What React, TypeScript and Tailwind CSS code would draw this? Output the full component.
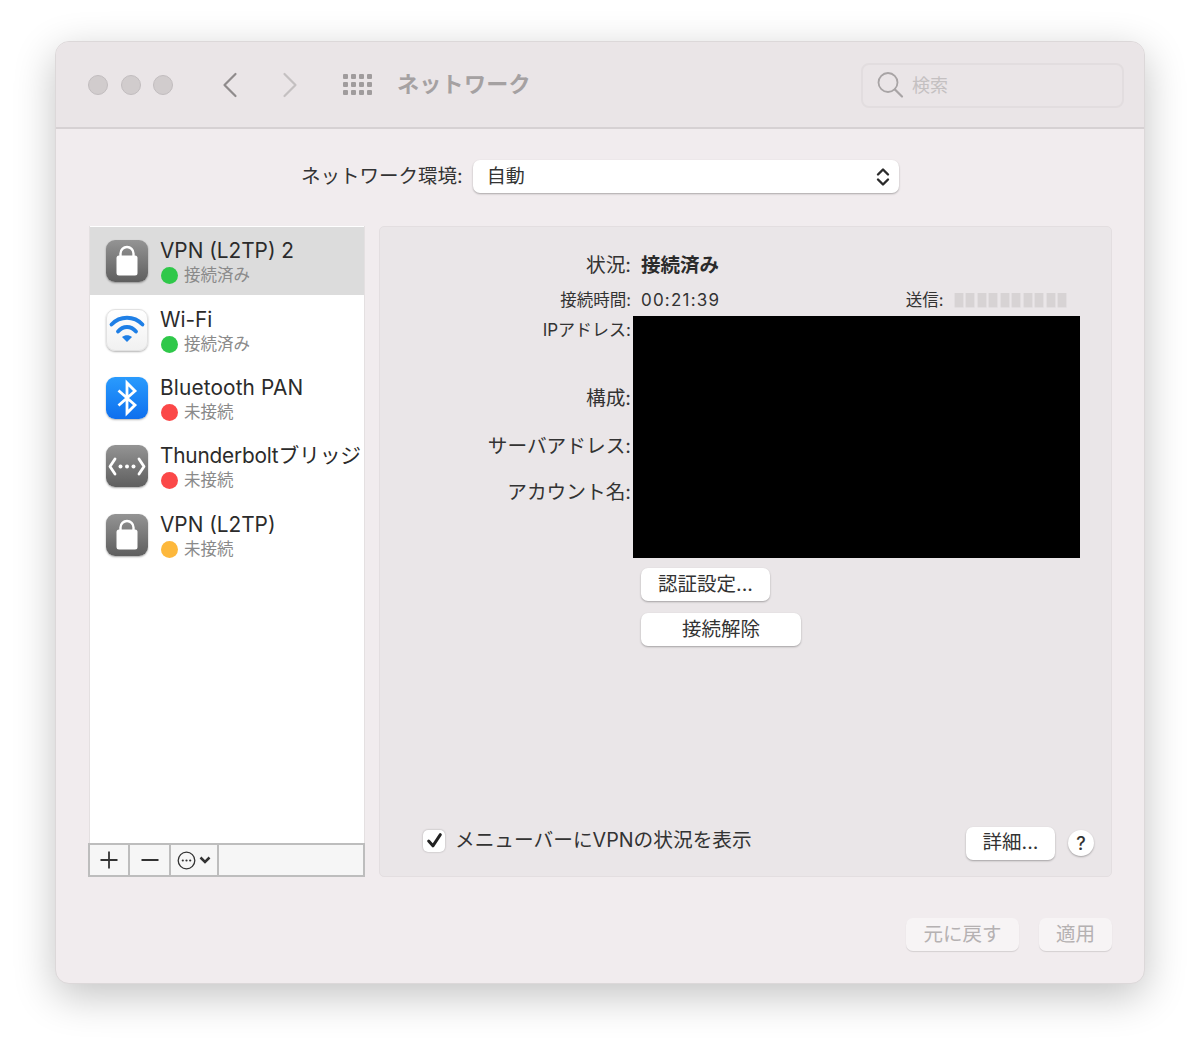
import { ChevronLeft, ChevronRight } from 'lucide-react'
import type { ReactNode } from 'react'

function LockIcon() {
  return (
    <div className="w-[42px] h-[42px] rounded-[9px] bg-gradient-to-b from-[#949494] to-[#5f5f5f] shadow-[0_1px_2px_rgba(0,0,0,0.35)] flex items-center justify-center">
      <svg width="42" height="42" viewBox="0 0 42 42">
        <path d="M14.5 17v-3.5a6.5 6.5 0 0 1 13 0V17" fill="none" stroke="#fff" strokeWidth="2.4" />
        <rect x="10.5" y="15.5" width="21" height="20" rx="2.5" fill="#fff" />
      </svg>
    </div>
  )
}

function WifiIcon() {
  return (
    <div className="w-[42px] h-[42px] rounded-[9px] bg-gradient-to-b from-white to-[#f1f1f1] border border-[#e2e2e2] shadow-[0_1px_2px_rgba(0,0,0,0.3)] flex items-center justify-center">
      <svg width="40" height="40" viewBox="0 0 40 40">
        <path d="M4.5 14.5C13 5.5 27 5.5 35.5 14.5" fill="none" stroke="#1e7fe6" strokeWidth="3.8" strokeLinecap="round" />
        <path d="M11 21.5C16 15.5 24 15.5 29 21.5" fill="none" stroke="#1e7fe6" strokeWidth="3.8" strokeLinecap="round" />
        <path d="M15 27 20 32 25 27C22 24.5 18 24.5 15 27Z" fill="#1e7fe6" />
      </svg>
    </div>
  )
}

function BluetoothIcon() {
  return (
    <div className="w-[42px] h-[42px] rounded-[9px] bg-gradient-to-b from-[#2a9bfd] to-[#0f6fee] shadow-[0_1px_2px_rgba(0,0,0,0.3)] flex items-center justify-center">
      <svg width="42" height="42" viewBox="0 0 42 42">
        <path d="M12.5 13.5 29 28 21 36V6l8 8-16.5 14.5" fill="none" stroke="#fff" strokeWidth="2.8" strokeLinejoin="miter" />
      </svg>
    </div>
  )
}

function BridgeIcon() {
  return (
    <div className="w-[42px] h-[42px] rounded-[9px] bg-gradient-to-b from-[#949494] to-[#5f5f5f] shadow-[0_1px_2px_rgba(0,0,0,0.35)] flex items-center justify-center">
      <svg width="42" height="42" viewBox="0 0 42 42">
        <path d="M9 14 4 21.5 9 29M33 14 38 21.5 33 29" fill="none" stroke="#fff" strokeWidth="2.8" strokeLinecap="round" strokeLinejoin="round" />
        <circle cx="14.5" cy="21.5" r="2" fill="#fff" />
        <circle cx="21" cy="21.5" r="2" fill="#fff" />
        <circle cx="27.5" cy="21.5" r="2" fill="#fff" />
      </svg>
    </div>
  )
}

const services = [
  { name: 'VPN (L2TP) 2', status: '接続済み', dot: 'bg-[#2fc84a]', icon: <LockIcon />, active: true, track: '' },
  { name: 'Wi-Fi', status: '接続済み', dot: 'bg-[#2fc84a]', icon: <WifiIcon />, active: false, track: '' },
  { name: 'Bluetooth PAN', status: '未接続', dot: 'bg-[#fb4848]', icon: <BluetoothIcon />, active: false, track: 'tracking-[0.15px]' },
  { name: 'Thunderboltブリッジ', status: '未接続', dot: 'bg-[#fb4848]', icon: <BridgeIcon />, active: false, track: 'tracking-[-0.2px]' },
  { name: 'VPN (L2TP)', status: '未接続', dot: 'bg-[#fdb83c]', icon: <LockIcon />, active: false, track: '' },
]

function ServiceRow({ item }: { item: (typeof services)[number] }) {
  return (
    <div className={'h-[68.4px] pl-[16px] flex items-center gap-[12px] whitespace-nowrap ' + (item.active ? 'bg-[#dcdcdc]' : '')}>
      {item.icon}
      <div className="pt-[1px]">
        <div className={'text-[20.8px] leading-[27px] text-[#2b2b2b] ' + item.track}>{item.name}</div>
        <div className="flex items-center gap-[6px] h-[22px] pl-[1px] pt-[1px]">
          <span className={'w-[17px] h-[17px] rounded-full ' + item.dot} />
          <span className="text-[16.5px] text-[#8a8a8a]">{item.status}</span>
        </div>
      </div>
    </div>
  )
}

function MacButton({ children, className }: { children: ReactNode; className: string }) {
  return (
    <button className={'h-[33px] rounded-[7px] bg-white text-[#333] text-[19.5px] leading-none shadow-[0_1px_2px_rgba(0,0,0,0.3)] flex items-center justify-center ' + className}>
      {children}
    </button>
  )
}

export default function App() {
  return (
    <div className="w-[1200px] h-[1052px] bg-white pt-[41px] pl-[55px] font-['Inter','Noto_Sans_CJK_JP',sans-serif] overflow-hidden">
      <div className="w-[1090px] h-[943px] rounded-[14px] bg-[#f1ecee] border border-[#dcd8d9] shadow-[0_12px_42px_rgba(0,0,0,0.24)] overflow-hidden flex flex-col">
        <div className="h-[87px] shrink-0 bg-[#eae5e7] border-b-2 border-[#d6d1d3] flex items-center pl-[32px] pr-[20px]">
          <div className="flex gap-[12.5px]">
            <span className="w-[20px] h-[20px] rounded-full bg-[#d1cccd] border border-[#c2bdbf]" />
            <span className="w-[20px] h-[20px] rounded-full bg-[#d1cccd] border border-[#c2bdbf]" />
            <span className="w-[20px] h-[20px] rounded-full bg-[#d1cccd] border border-[#c2bdbf]" />
          </div>
          <ChevronLeft className="ml-[35px] w-[44px] h-[44px] text-[#8f8b8c]" strokeWidth={1.2} />
          <ChevronRight className="ml-[16px] w-[44px] h-[44px] text-[#c4c0c1]" strokeWidth={1.2} />
          <div className="ml-[31px] grid grid-cols-4 gap-x-[3px] gap-y-[3px]">
            {Array.from({ length: 12 }).map((_, i) => (
              <span key={i} className="w-[5px] h-[5px] bg-[#a09c9d] rounded-[1px]" />
            ))}
          </div>
          <div className="ml-[25px] text-[22px] font-bold text-[#a5a1a2] tracking-[0.3px] whitespace-nowrap">ネットワーク</div>
          <div className="ml-auto mt-[1px] w-[263px] h-[45px] rounded-[8px] border-2 border-[#e2dddf] flex items-center pl-[13px] gap-[8px]">
            <svg width="28" height="28" viewBox="0 0 28 28">
              <circle cx="12" cy="11.5" r="9.5" fill="none" stroke="#a8a4a5" strokeWidth="1.8" />
              <path d="M19 18.5 26 25.5" stroke="#a8a4a5" strokeWidth="2.2" strokeLinecap="round" />
            </svg>
            <span className="text-[18px] text-[#c4c0c1]">検索</span>
          </div>
        </div>

        <div className="flex-1 flex flex-col pl-[33px] pr-[32px]">
          <div className="h-[97px] shrink-0 flex items-center justify-start pl-[212px] gap-[10px] pb-[2px]">
            <span className="text-[19.5px] text-[#333] whitespace-nowrap">ネットワーク環境:</span>
            <div className="w-[426px] h-[33px] rounded-[7px] bg-white shadow-[0_1px_2px_rgba(0,0,0,0.3)] flex items-center justify-between pl-[14px] pr-[9px]">
              <span className="pt-[1px] text-[19px] text-[#333]">自動</span>
              <svg width="14" height="22" viewBox="0 0 14 22">
                <path d="M2 8.5 7 3.5l5 5M2 13.5 7 18.5l5-5" fill="none" stroke="#2b2b2b" strokeWidth="2.4" strokeLinecap="round" strokeLinejoin="round" />
              </svg>
            </div>
          </div>

          <div className="h-[651px] shrink-0 flex gap-[14px]">
            <div className="w-[276px] flex flex-col bg-white">
              <div className="flex-1 pt-[1px] border-x border-[#e4e0e1]">
                {services.map((s) => (
                  <ServiceRow key={s.name} item={s} />
                ))}
              </div>
              <div className="h-[34px] -ml-[1px] flex bg-[#f6f6f6] border-2 border-[#bdbdbd] text-[#333]">
                <div className="w-[40px] border-r-2 border-[#bdbdbd] flex items-center justify-center">
                  <svg width="18" height="18" viewBox="0 0 18 18"><path d="M9 0.5V17.5M0.5 9H17.5" stroke="#333" strokeWidth="1.8" /></svg>
                </div>
                <div className="w-[41px] border-r-2 border-[#bdbdbd] flex items-center justify-center">
                  <svg width="18" height="18" viewBox="0 0 18 18"><path d="M0.5 9H17.5" stroke="#333" strokeWidth="1.8" /></svg>
                </div>
                <div className="w-[48px] border-r-2 border-[#bdbdbd] flex items-center justify-center gap-[3px]">
                  <svg width="19" height="19" viewBox="0 0 19 19">
                    <circle cx="9.5" cy="9.5" r="8.3" fill="none" stroke="#333" strokeWidth="1.3" />
                    <circle cx="5.8" cy="9.5" r="1.1" fill="#333" />
                    <circle cx="9.5" cy="9.5" r="1.1" fill="#333" />
                    <circle cx="13.2" cy="9.5" r="1.1" fill="#333" />
                  </svg>
                  <svg width="12" height="8" viewBox="0 0 12 8"><path d="M1.5 1.5 6 6l4.5-4.5" fill="none" stroke="#333" strokeWidth="2.5" /></svg>
                </div>
              </div>
            </div>

            <div className="w-[733px] rounded-[5px] bg-[#eae6e8] border border-[#e3dee0] flex flex-col">
              <div className="h-[28px] mt-[25px] flex items-center">
                <div className="w-[251px] text-right text-[19.7px] text-[#333]">状況:</div>
                <div className="ml-[10px] text-[19.5px] font-bold text-[#2b2b2b]">接続済み</div>
              </div>
              <div className="h-[22px] mt-[10px] flex items-center">
                <div className="w-[251px] pb-[2px] text-right text-[16.5px] text-[#333]">接続時間:</div>
                <div className="ml-[10px] text-[17px] tracking-[1.2px] text-[#333]">00:21:39</div>
                <div className="ml-auto mr-[44px] pb-[2px] flex items-center gap-[10px]">
                  <span className="text-[16.5px] text-[#333]">送信:</span>
                  <div className="flex gap-[1.5px]">
                    {Array.from({ length: 10 }).map((_, i) => (
                      <span key={i} className="w-[10px] h-[15px] bg-[#d7d3d4] border-x border-b border-[#e2dee0] rounded-b-[2px]" />
                    ))}
                  </div>
                </div>
              </div>
              <div className="mt-[4px] flex items-start">
                <div className="w-[251px] text-right text-[#333] flex flex-col">
                  <div className="h-[24px] mt-[2px] text-[17px] leading-[24px]">IPアドレス:</div>
                  <div className="h-[28px] mt-[42px] text-[19.7px] leading-[28px]">構成:</div>
                  <div className="h-[28px] mt-[20px] text-[19.7px] leading-[28px] whitespace-nowrap">サーバアドレス:</div>
                  <div className="h-[28px] mt-[18px] text-[19.7px] leading-[28px]">アカウント名:</div>
                </div>
                <div className="ml-[2px] w-[447px] h-[242px] bg-black" />
              </div>
              <MacButton className="mt-[10px] ml-[261px] w-[129px]">認証設定...</MacButton>
              <MacButton className="mt-[12px] ml-[261px] w-[160px]">接続解除</MacButton>
              <div className="mt-auto mb-[15px] flex items-center pl-[43px] pr-[17px]">
                <div className="pb-[5px] flex items-center">
                  <div className="w-[22px] h-[22px] rounded-[5px] bg-white shadow-[0_0_2px_rgba(0,0,0,0.3)] flex items-center justify-center">
                    <svg width="17" height="17" viewBox="0 0 16 16"><path d="M2.5 8.5 6.5 13 13.5 2.5" fill="none" stroke="#222" strokeWidth="2.8" strokeLinecap="round" strokeLinejoin="round" /></svg>
                  </div>
                  <span className="ml-[10px] pt-[1px] text-[19.7px] text-[#333] whitespace-nowrap">メニューバーにVPNの状況を表示</span>
                </div>
                <MacButton className="ml-auto w-[89px]">詳細...</MacButton>
                <button className="ml-[13px] w-[26px] h-[26px] rounded-full bg-white text-[18px] font-medium text-[#333] shadow-[0_1px_2px_rgba(0,0,0,0.3)] flex items-center justify-center">?</button>
              </div>
            </div>
          </div>

          <div className="flex justify-end gap-[20px] mt-[41px]">
            <div className="w-[113px] h-[33px] rounded-[7px] bg-[#f7f4f5] text-[19.5px] text-[#b5b1b2] shadow-[0_1px_1px_rgba(0,0,0,0.12)] flex items-center justify-center">元に戻す</div>
            <div className="w-[73px] h-[33px] rounded-[7px] bg-[#f7f4f5] text-[19.5px] text-[#b5b1b2] shadow-[0_1px_1px_rgba(0,0,0,0.12)] flex items-center justify-center">適用</div>
          </div>
        </div>
      </div>
    </div>
  )
}
